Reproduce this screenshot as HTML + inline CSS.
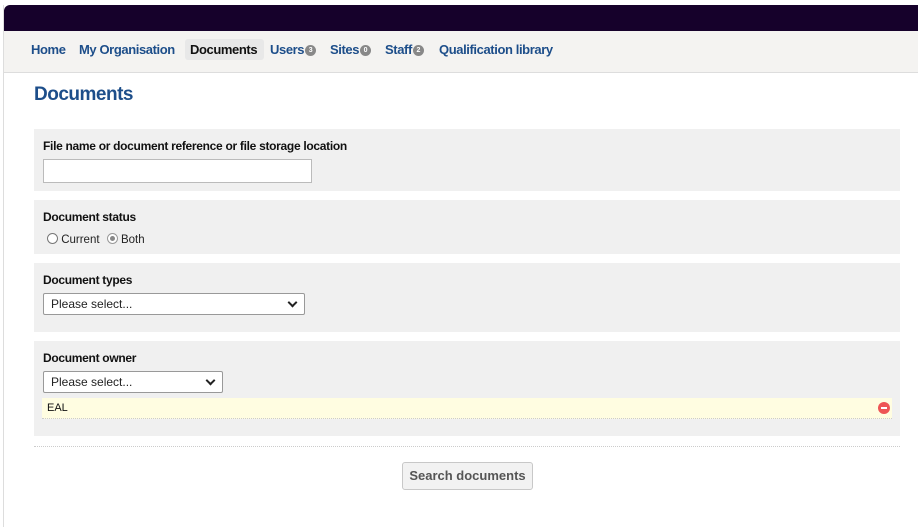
<!DOCTYPE html>
<html><head><meta charset="utf-8"><style>
*{box-sizing:border-box;margin:0;padding:0}
body{width:918px;height:527px;background:#fff;font-family:"Liberation Sans",sans-serif;position:relative;overflow:hidden}
.a{position:absolute}
.top{left:4px;top:5px;width:914px;height:26px;background:#16012b;border-radius:6px 0 0 0}
.nav{left:4px;top:31px;width:914px;height:42px;background:#f4f3f1;border-bottom:1px solid #ddd}
.side{left:3px;top:5px;width:1px;height:522px;background:#ddd}
.nav span{position:absolute;top:11px;font-size:13px;letter-spacing:-0.4px;font-weight:bold;color:#1d4e8a;white-space:nowrap}
.b{display:inline-block;width:11px;height:11px;border-radius:50%;background:#888;color:#fff;font-size:7px;text-align:center;line-height:11px;vertical-align:middle;margin-left:1px;font-style:normal;letter-spacing:0}
h1{position:absolute;left:34px;top:84px;font-size:19px;letter-spacing:-0.5px;color:#1d4e8a;font-weight:bold}
.p{left:34px;width:866px;background:#f0f0f0}
.l{position:absolute;left:9px;font-size:12px;letter-spacing:-0.3px;font-weight:bold;color:#111}
.inp{position:absolute;background:#fff;border:1px solid #bbb}
.sel{position:absolute;background:#fff;border:1px solid #999;border-radius:2px;font-size:12px;color:#222;padding:3px 7px}
.sel:after{content:"";position:absolute;right:8px;top:5px;width:5px;height:5px;border-right:2px solid #222;border-bottom:2px solid #222;transform:rotate(45deg)}
</style></head><body>
<div class="a side"></div>
<div class="a top"></div>
<div class="a nav">
<span style="left:27px">Home</span>
<span style="left:75px">My Organisation</span>
<span style="left:181px;top:8px;background:#e8e8e8;color:#111;padding:3px 5px;border-radius:3px;width:79px">Documents</span>
<span style="left:266px">Users<i class="b">3</i></span>
<span style="left:326px">Sites<i class="b">0</i></span>
<span style="left:381px">Staff<i class="b">2</i></span>
<span style="left:435px">Qualification library</span>
</div>
<h1>Documents</h1>
<div class="a p" style="top:129px;height:62px">
<div class="l" style="top:10px">File name or document reference or file storage location</div>
<div class="inp" style="left:9px;top:30px;width:269px;height:24px"></div>
</div>
<div class="a p" style="top:200px;height:54px">
<div class="l" style="top:10px">Document status</div>
<div style="position:absolute;left:13px;top:33px;font-size:11.5px;color:#222">
<span style="display:inline-block;width:11px;height:11px;border:1px solid #777;border-radius:50%;background:#fff;vertical-align:-1px"></span> Current
<span style="display:inline-block;width:11px;height:11px;border:1px solid #999;border-radius:50%;background:#fff;vertical-align:-1px;position:relative;margin-left:4px"><i style="position:absolute;left:2px;top:2px;width:5px;height:5px;border-radius:50%;background:#888"></i></span> Both
</div>
</div>
<div class="a p" style="top:263px;height:69px">
<div class="l" style="top:10px">Document types</div>
<div class="sel" style="left:9px;top:30px;width:262px;height:22px">Please select...</div>
</div>
<div class="a p" style="top:341px;height:95px">
<div class="l" style="top:10px">Document owner</div>
<div class="sel" style="left:9px;top:30px;width:180px;height:22px">Please select...</div>
<div style="position:absolute;left:8px;top:57px;width:850px;height:21px;background:#fffde1;border-bottom:1px dotted #ccc;font-size:11px;color:#111;padding:4px 5px">EAL
<i style="position:absolute;right:2px;top:4px;width:12px;height:12px;border-radius:50%;background:#e55"><b style="position:absolute;left:3px;top:5px;width:6px;height:2px;background:#fff"></b></i></div>
</div>
<div class="a" style="left:34px;top:446px;width:866px;border-top:1px dotted #ccc"></div>
<div class="a" style="left:402px;top:462px;width:131px;height:28px;background:#f2f2f2;border:1px solid #c8c8c8;border-radius:3px;font-size:13px;font-weight:bold;color:#555;text-align:center;line-height:26px">Search documents</div>
</body></html>
